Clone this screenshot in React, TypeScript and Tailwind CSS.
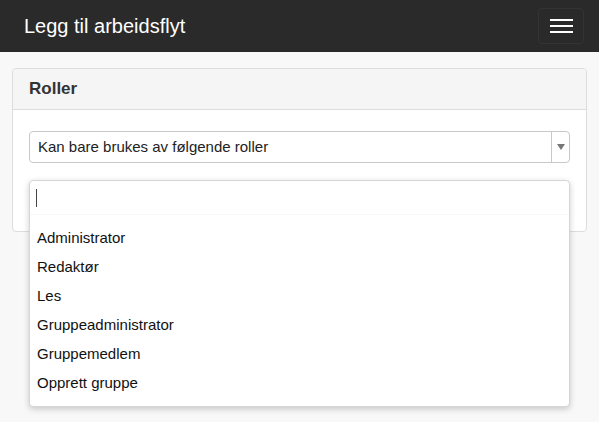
import { useState } from "react";

// Workflow role picker: dark top bar, a "Roller" panel with a select and an
// open search dropdown listing roles.

const ROLES = [
  "Administrator",
  "Redaktør",
  "Les",
  "Gruppeadministrator",
  "Gruppemedlem",
  "Opprett gruppe",
];

export default function App() {
  const [query, setQuery] = useState("");

  return (
    <div
      className="min-h-[422px] bg-[#f8f8f8] text-[#333]"
      style={{ fontFamily: '"Liberation Sans", Arial, sans-serif' }}
    >
      <header className="flex h-[52px] items-center justify-between bg-[#2a2a2a] pl-6 pr-[15px]">
        <h1 className="text-[20px] text-white">Legg til arbeidsflyt</h1>
        <button
          type="button"
          aria-label="Meny"
          className="flex h-[36px] w-[46px] flex-col items-center justify-center gap-[3.5px] rounded border border-[#333]"
        >
          <span className="block h-[2.5px] w-[23px] bg-white" />
          <span className="block h-[2.5px] w-[23px] bg-white" />
          <span className="block h-[2.5px] w-[23px] bg-white" />
        </button>
      </header>

      <div className="px-3 pt-4">
        <section className="relative rounded border border-[#ddd] bg-white">
          <div className="flex h-[41px] items-center rounded-t border-b border-[#ddd] bg-[#f5f5f5] px-4">
            <h2 className="text-[17px] font-bold">Roller</h2>
          </div>

          <div className="px-4 pb-[18px] pt-[21px]">
            <div className="flex h-[32px] items-stretch rounded border border-[#c8c8c8] bg-white">
              <span className="flex flex-1 items-center pl-2 text-[15px] text-[#222]">
                Kan bare brukes av følgende roller
              </span>
              <span className="flex w-[18px] items-center justify-center border-l border-[#c8c8c8]">
                <svg width="8" height="6" viewBox="0 0 8 6" aria-hidden="true">
                  <path d="M0 0h8L4 6z" fill="#777" />
                </svg>
              </span>
            </div>
            <div className="mt-4 h-[34px]" />
          </div>

          {/* open dropdown overlaps the panel bottom */}
          <div className="absolute left-4 right-4 top-[111px] z-10 rounded border border-[#d6d6d6] bg-white shadow-[0_2px_6px_rgba(0,0,0,0.2)]">
            <div className="flex h-[34px] items-center border-b border-[#f7f7f7] px-[6px]">
              <span className="h-[18px] w-px shrink-0 bg-[#444]" />
              <input
                value={query}
                onChange={(e) => setQuery(e.target.value)}
                className="w-full bg-transparent text-[15px] caret-transparent outline-none"
              />
            </div>
            <ul className="pb-[8px] pt-[9px]">
              {ROLES.filter((r) =>
                r.toLowerCase().includes(query.toLowerCase())
              ).map((role) => (
                <li
                  key={role}
                  className="flex h-[29px] items-center px-[7px] text-[15px] text-[#111]"
                >
                  {role}
                </li>
              ))}
            </ul>
          </div>
        </section>
      </div>
    </div>
  );
}
